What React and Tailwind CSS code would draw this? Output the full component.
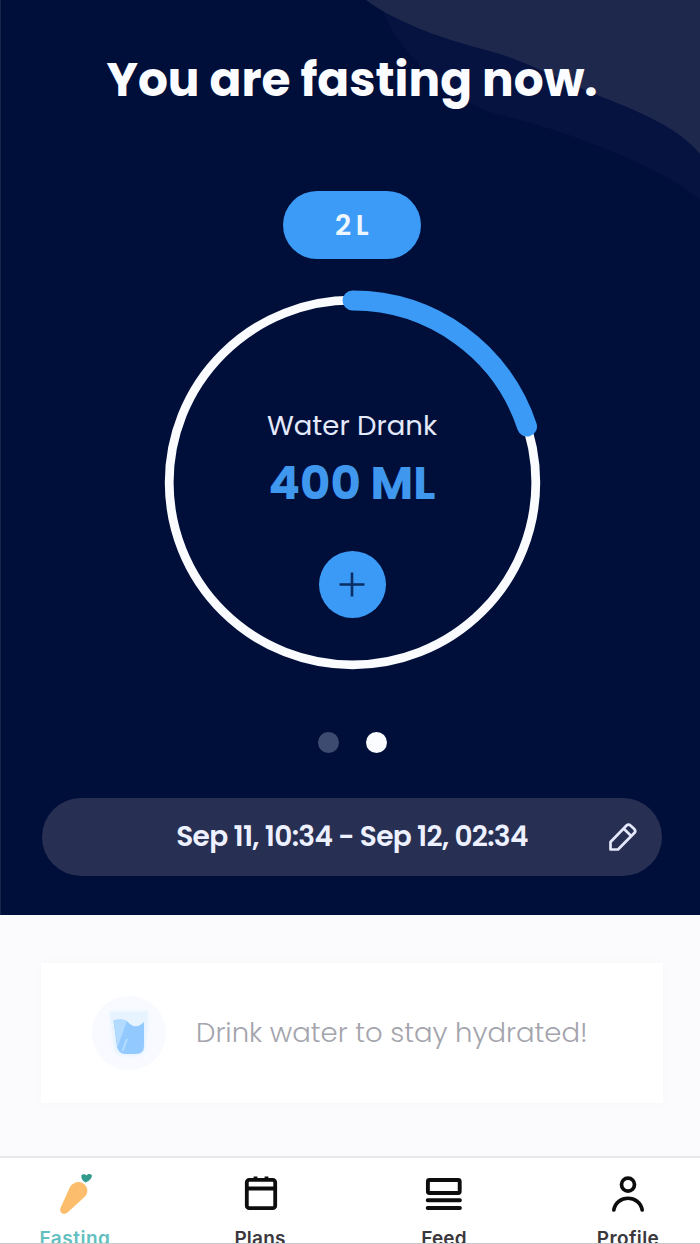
import React from "react";

const tabs = [
  { label: "Fasting", color: "text-[#62bfc0]", width: "w-[150px]", tracking: "tracking-[0.5px]", icon: <CarrotIcon /> },
  { label: "Plans", color: "text-[#3a373d]", width: "w-[220px]", tracking: "tracking-[0.2px]", icon: <CalendarIcon /> },
  { label: "Feed", color: "text-[#3a373d]", width: "w-[148px]", tracking: "tracking-[0.2px]", icon: <FeedIcon /> },
  { label: "Profile", color: "text-[#3a373d]", width: "w-[220px]", tracking: "tracking-[0.4px]", icon: <ProfileIcon /> },
];

function CarrotIcon() {
  return (
    <svg className="shrink-0" width="48" height="48" viewBox="0 0 48 48" fill="none">
      <path d="M18.500 20C21 14.500 27.500 12 32.500 15.500C37.500 19.500 37.500 25.500 33.500 29L16.500 44.500C13 47.500 8 45 9.500 40Z" fill="#fcbe6c" />
      <path d="M34.500 14.500C30.500 12 30.500 10 30.300 7.500C32 5.500 34 6 35.500 7.500C37 5.500 39.500 5.500 41 7.500C41 10 39 12.500 34.500 14.500Z" fill="#329a8d" />
    </svg>
  );
}

function CalendarIcon() {
  return (
    <svg className="shrink-0" width="48" height="48" viewBox="0 0 48 48" fill="none" stroke="#0d0d0d" strokeWidth="3.800">
      <rect x="10.800" y="11.800" width="28.400" height="28.400" rx="2.500" />
      <path d="M11 20.500H39M19.500 8.600V12M30.500 8.600V12" />
    </svg>
  );
}

function FeedIcon() {
  return (
    <svg className="shrink-0" width="48" height="48" viewBox="0 0 48 48" fill="none" stroke="#0d0d0d" strokeWidth="3.900" strokeLinecap="round">
      <rect x="7.900" y="12" width="31.800" height="13" rx="1.500" />
      <path d="M7.700 32.300H39.900M7.700 40H39.900" />
    </svg>
  );
}

function ProfileIcon() {
  return (
    <svg className="shrink-0" width="48" height="48" viewBox="0 0 48 48" fill="none" stroke="#0d0d0d" strokeWidth="3.700" strokeLinecap="round">
      <circle cx="24" cy="16.600" r="6.500" />
      <path d="M9.800 42C12.500 26.300 35.500 26.300 38.200 42" />
    </svg>
  );
}

function PencilIcon() {
  return (
    <svg width="32" height="32" viewBox="0 0 32 32" fill="none" stroke="#e3e8fb" strokeWidth="2.700" strokeLinejoin="round">
      <path d="M4.500 28.500V21L20.500 4.500Q22.500 2.500 24.500 4.500L28.500 8.300Q30 10 28.500 11.800L12 28.500Z" />
      <path d="M17.500 7.500L25.300 15" />
    </svg>
  );
}

function GlassIcon() {
  return (
    <svg width="76" height="76" viewBox="0 0 76 76">
      <defs>
        <filter id="glow" x="-40%" y="-40%" width="180%" height="180%"><feGaussianBlur stdDeviation="2.500" /></filter>
      </defs>
      <circle cx="38" cy="38" r="37" fill="#f8faff" />
      <path d="M20 18H56L53 53Q52 59 46 60H32Q25 60 24 53Z" fill="#e2f1ff" filter="url(#glow)" />
      <path d="M18.500 16.500H57L54 52Q53 59 46 59H31Q25 59 24 52Z" fill="#e7f4ff" />
      <path d="M22.500 25.500Q29 23.500 36 26Q44 36 53 27V51Q53 59 45 59H34Q28 59 26 52Z" fill="#92caff" />
      <path d="M22.500 25.500Q29 23.500 36 26L26.500 52Z" fill="#b3dbff" />
      <path d="M36 44L31.500 56" stroke="#b6dcff" strokeWidth="2" />
    </svg>
  );
}

function WaterRing() {
  return (
    <svg className="col-start-1 row-start-1" width="400" height="400" viewBox="0 0 400 400" fill="none">
      <ellipse cx="200.500" cy="202.500" rx="183.300" ry="182.300" stroke="#fafbff" strokeWidth="8.800" />
      <path d="M200.500 20.500A183.300 182.300 0 0 1 375 146.500" stroke="#3b9af5" strokeWidth="20" strokeLinecap="round" />
    </svg>
  );
}

export default function App() {
  return (
    <div className="flex h-[1244px] w-[700px] flex-col overflow-hidden bg-white font-['Poppins','Inter',sans-serif]">
      <section className="relative flex h-[915px] shrink-0 flex-col items-center border-l border-[#17264b] bg-[#000f3a] pl-[3px]">
        <svg className="absolute right-0 top-0" width="340" height="210" viewBox="360 0 340 210">
          <path d="M384 14C392 32 401 46 417 62C438 86 470 107 500 115C530 122 560 131 590 143C630 158 672 176 700 200V0H384Z" fill="#06123f" />
          <path d="M366 0C383 13 400 20 420 29C450 41 476 47 503 55C535 66 565 82 597 95C632 109 676 125 700 154V0Z" fill="#1e284c" />
        </svg>
        <h1 className="relative mt-[50px] h-[60px] whitespace-nowrap text-[47px] font-bold leading-[60px] text-[#fbfcff]">You are fasting now.</h1>
        <div className="relative mt-[81px] flex h-[68px] w-[138px] shrink-0 items-center justify-center rounded-full bg-[#3b9bf6] pt-px text-[28px] font-semibold tracking-[0.5px] text-[#eef7ff] [word-spacing:-3px]">2 L</div>
        <div className="mt-[21px] grid h-[400px] w-[400px] shrink-0">
          <WaterRing />
          <div className="col-start-1 row-start-1 flex flex-col items-center pt-[126px]">
            <p className="h-10 whitespace-nowrap text-[27.5px] leading-10 text-[#e4e9fb]">Water Drank</p>
            <p className="mt-[7px] h-[60px] whitespace-nowrap text-[46.5px] font-bold leading-[60px] text-[#4098ee]">400 ML</p>
            <button aria-label="Add water" className="mt-[38px] flex size-[67px] items-center justify-center rounded-full bg-[#3b9af6]">
              <svg width="28" height="28" viewBox="0 0 28 28" stroke="#0b2e65" strokeWidth="2.600"><path d="M1.500 13.500H26.500M14 1.500V25.500" /></svg>
            </button>
          </div>
        </div>
        <div className="mt-[52px] flex gap-[27px]">
          <span className="size-[21px] rounded-full bg-[#3e4b70]" />
          <span className="size-[21px] rounded-full bg-[#fafcff]" />
        </div>
        <div className="mt-[45px] grid h-[78px] w-[620px] shrink-0 grid-cols-[80px_1fr_80px] items-center rounded-full bg-[#272f53]">
          <p className="col-start-2 whitespace-nowrap text-center text-[28px] font-semibold leading-10 tracking-[-0.68px] text-[#edf1ff]">Sep 11, 10:34 - Sep 12, 02:34</p>
          <span className="flex justify-center"><PencilIcon /></span>
        </div>
      </section>
      <section className="h-[241px] shrink-0 bg-[#fbfbfd] px-[41px] pt-[48px]">
        <div className="flex h-[140px] w-[622px] items-center bg-white pl-[50px] shadow-[0_0_16px_rgba(0,0,0,0.018)]">
          <GlassIcon />
          <p className="ml-[29px] whitespace-nowrap text-[27.5px] font-light leading-10 text-[#a4a4ad]">Drink water to stay hydrated!</p>
        </div>
      </section>
      <nav className="flex h-[88px] shrink-0 overflow-hidden border-b border-t-2 border-b-[#c9c9cb] border-t-[#e8e8ea]">
        {tabs.map(({ label, color, width, tracking, icon }) => (
          <div key={label} className={`flex shrink-0 flex-col items-center pt-[10px] ${width}`}>
            {icon}
            <span className={`mt-[9px] font-['Inter',sans-serif] text-[19px] font-semibold leading-7 ${color} ${tracking}`}>{label}</span>
          </div>
        ))}
      </nav>
    </div>
  );
}
